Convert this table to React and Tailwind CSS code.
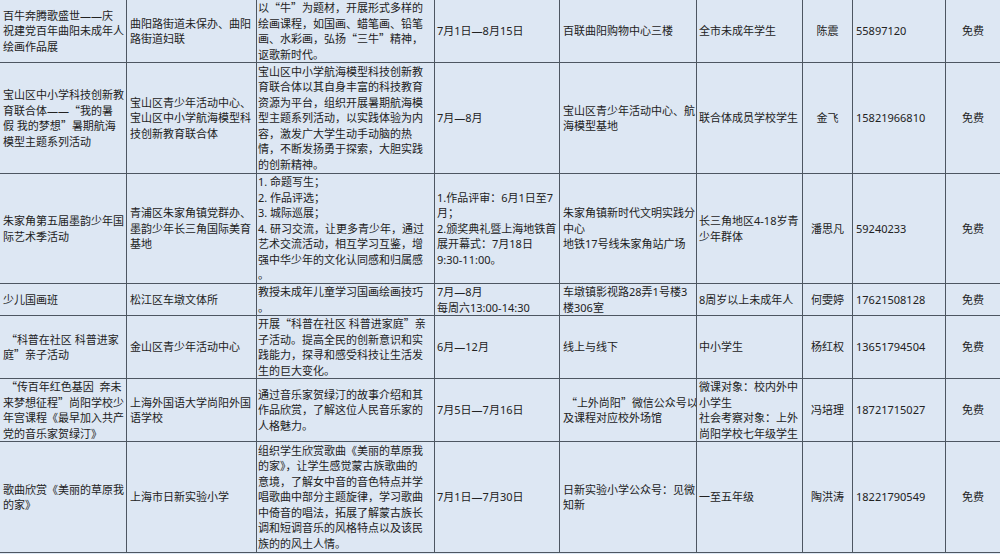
import React from 'react';

const rows = [
  {
    h: 'h-[63px]',
    cells: [
      ['百牛奔腾歌盛世——庆', '祝建党百年曲阳未成年人', '绘画作品展'],
      ['曲阳路街道未保办、曲阳', '路街道妇联'],
      ['以“牛”为题材，开展形式多样的', '绘画课程，如国画、蜡笔画、铅笔', '画、水彩画，弘扬“三牛”精神，', '讴歌新时代。'],
      ['7月1日—8月15日'],
      ['百联曲阳购物中心三楼'],
      ['全市未成年学生'],
      ['陈震'],
      ['55897120'],
      ['免费'],
    ],
  },
  {
    h: 'h-[111px]',
    cells: [
      ['宝山区中小学科技创新教', '育联合体——“我的暑', '假 我的梦想”暑期航海', '模型主题系列活动'],
      ['宝山区青少年活动中心、', '宝山区中小学航海模型科', '技创新教育联合体'],
      [
        '宝山区中小学航海模型科技创新教',
        '育联合体以其自身丰富的科技教育',
        '资源为平台，组织开展暑期航海模',
        '型主题系列活动，以实践体验为内',
        '容，激发广大学生动手动脑的热',
        '情，不断发扬勇于探索，大胆实践',
        '的创新精神。',
      ],
      ['7月—8月'],
      ['宝山区青少年活动中心、航', '海模型基地'],
      ['联合体成员学校学生'],
      ['金飞'],
      ['15821966810'],
      ['免费'],
    ],
  },
  {
    h: 'h-[110px]',
    cells: [
      ['朱家角第五届墨韵少年国', '际艺术季活动'],
      ['青浦区朱家角镇党群办、', '墨韵少年长三角国际美育', '基地'],
      [
        '1. 命题写生；',
        '2. 作品评选；',
        '3. 城际巡展；',
        '4. 研习交流，让更多青少年，通过',
        '艺术交流活动，相互学习互鉴，增',
        '强中华少年的文化认同感和归属感',
        '。',
      ],
      ['1.作品评审：6月1日至7', '月；', '2.颁奖典礼暨上海地铁首', '展开幕式：7月18日', '9:30-11:00。'],
      ['朱家角镇新时代文明实践分', '中心', '地铁17号线朱家角站广场'],
      ['长三角地区4-18岁青', '少年群体'],
      ['潘思凡'],
      ['59240233'],
      ['免费'],
    ],
  },
  {
    h: 'h-[32px]',
    cells: [
      ['少儿国画班'],
      ['松江区车墩文体所'],
      ['教授未成年儿童学习国画绘画技巧', '。'],
      ['7月—8月', '每周六13:00-14:30'],
      ['车墩镇影视路28弄1号楼3', '楼306室'],
      ['8周岁以上未成年人'],
      ['何雯婷'],
      ['17621508128'],
      ['免费'],
    ],
  },
  {
    h: 'h-[63px]',
    cells: [
      ['\u00a0“科普在社区 科普进家', '庭”亲子活动'],
      ['金山区青少年活动中心'],
      ['开展“科普在社区 科普进家庭”亲', '子活动。提高全民的创新意识和实', '践能力，探寻和感受科技让生活发', '生的巨大变化。'],
      ['6月—12月'],
      ['线上与线下'],
      ['中小学生'],
      ['杨红权'],
      ['13651794504'],
      ['免费'],
    ],
  },
  {
    h: 'h-[63px]',
    cells: [
      ['\u00a0“传百年红色基因\u00a0\u00a0奔未', '来梦想征程”尚阳学校少', '年宫课程《最早加入共产', '党的音乐家贺绿汀》'],
      ['上海外国语大学尚阳外国', '语学校'],
      ['通过音乐家贺绿汀的故事介绍和其', '作品欣赏，了解这位人民音乐家的', '人格魅力。'],
      ['7月5日—7月16日'],
      ['\u00a0“上外尚阳”微信公众号以', '及课程对应校外场馆'],
      ['微课对象：校内外中', '小学生', '社会考察对象：上外', '尚阳学校七年级学生'],
      ['冯培理'],
      ['18721715027'],
      ['免费'],
    ],
  },
  {
    h: 'h-[111px]',
    cells: [
      ['歌曲欣赏《美丽的草原我', '的家》'],
      ['上海市日新实验小学'],
      [
        '组织学生欣赏歌曲《美丽的草原我',
        '的家》，让学生感觉蒙古族歌曲的',
        '意境，了解女中音的音色特点并学',
        '唱歌曲中部分主题旋律，学习歌曲',
        '中倚音的唱法，拓展了解蒙古族长',
        '调和短调音乐的风格特点以及该民',
        '族的的风土人情。',
      ],
      ['7月1日—7月30日'],
      ['日新实验小学公众号：见微', '知新'],
      ['一至五年级'],
      ['陶洪涛'],
      ['18221790549'],
      ['免费'],
    ],
  },
];

// column widths + alignment
const cols = [
  'w-[127px] pl-[3px]',
  'w-[130px] pl-[3px]',
  'w-[178px] pl-[1px]',
  'w-[125px] pl-[2px]',
  'w-[137px] pl-[3px]',
  'w-[106px] pl-[2px]',
  'w-[50px] justify-center text-center',
  'w-[93px] pl-[3px]',
  'w-[54px] justify-center text-center',
];

// curly quotes get the CJK font so they take a full-width box like the original
const Line = ({ text }) => {
  const parts = text.split(/([“”])/);
  return (
    <div>
      {parts.map((p, i) =>
        p === '“' || p === '”' ? (
          <span key={i} className="font-['Noto_Sans_CJK_SC']">
            {p}
          </span>
        ) : (
          p
        )
      )}
    </div>
  );
};

export default function App() {
  return (
    <div
      className="w-[1000px] h-[554px] overflow-hidden bg-[#dde7f3] text-[#222] text-[11px] leading-[15.5px]"
      style={{ fontFamily: '"Noto Sans", "Noto Sans CJK SC", sans-serif' }}
    >
      {rows.map((row, ri) => (
        <div key={ri} className={`flex border-b border-[#4d5661] ${row.h}`}>
          {row.cells.map((lines, ci) => (
            <div
              key={ci}
              className={`flex flex-col justify-center shrink-0 overflow-hidden whitespace-nowrap ${
                ci < 8 ? 'border-r border-[#4d5661]' : ''
              } ${cols[ci]}`}
            >
              {lines.map((t, li) => (
                <Line key={li} text={t} />
              ))}
            </div>
          ))}
        </div>
      ))}
    </div>
  );
}
